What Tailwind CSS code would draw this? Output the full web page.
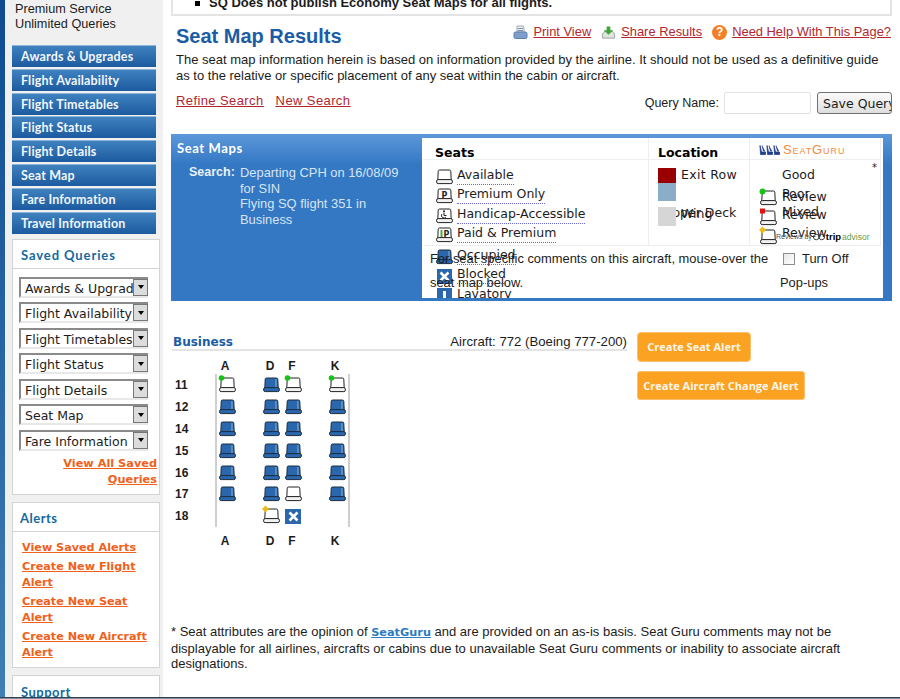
<!DOCTYPE html>
<html lang="en">
<head>
  <meta charset="UTF-8" />
  <title>Seat Map Results</title>
  <script src="https://cdn.jsdelivr.net/npm/@tailwindcss/browser@4"></script>
</head>
<body class="bg-white">

<!-- seat shapes used all over the chart and legend -->
<svg class="hidden">
  <symbol id="seat-full" viewBox="0 0 17 16">
    <path d="M1.8 11 L2.2 2.2 Q2.4 1 3.6 1 H13.4 Q14.6 1 14.8 2.2 L15.2 11 Z" fill="#2a67ad" stroke="#1c2c40" stroke-width="1"/>
    <path d="M12 2 H13.8 L14.2 10.5 H12 Z" fill="#5a8cc4"/>
    <rect x="0.6" y="10.6" width="15.8" height="4" rx="1.6" fill="#2a67ad" stroke="#1c2c40" stroke-width="1"/>
  </symbol>
  <symbol id="seat-open" viewBox="0 0 17 16">
    <path d="M1.8 11 L2.2 2.2 Q2.4 1 3.6 1 H13.4 Q14.6 1 14.8 2.2 L15.2 11 Z" fill="#fff" stroke="#222" stroke-width="1"/>
    <rect x="0.6" y="10.6" width="15.8" height="4" rx="1.6" fill="#f2f2f2" stroke="#222" stroke-width="1"/>
  </symbol>
  <symbol id="guru-seat" viewBox="0 0 7 10">
    <path d="M1 0.5 L2.5 7 H6.5 V9.5 H1.5 Z M3 0.5 L4.5 6 H6" fill="#23408c" stroke="#23408c" stroke-width="0.8"/>
  </symbol>
</svg>

<div class="flex h-[699px] w-[900px] overflow-hidden relative font-['Liberation_Sans',sans-serif] text-[12.9px] text-[#1c1c1c]">

  <!-- left rail -->
  <aside class="w-[171px] shrink-0 flex">
    <div class="w-[5px] bg-gradient-to-b from-[#0e4a92] to-[#3f7fb4]"></div>
    <div class="w-[158px] bg-[#f0f0f0] px-[7px]">
      <div class="pl-[3px] pt-[2px] h-[45px] leading-[15px] text-[12.7px]">
        <p>Premium Service</p>
        <p>Unlimited Queries</p>
      </div>
      <nav class="flex flex-col gap-[1.8px] font-['Lato',sans-serif] font-bold text-[12.5px] tracking-[0.15px] text-[#f2f6fb]">
        <a class="h-[22px] pl-[9px] leading-[21px] bg-gradient-to-b from-[#3f82bf] to-[#1c5a9f] border-t border-[#8fb4d6]">Awards &amp; Upgrades</a>
        <a class="h-[22px] pl-[9px] leading-[21px] bg-gradient-to-b from-[#3f82bf] to-[#1c5a9f] border-t border-[#8fb4d6]">Flight Availability</a>
        <a class="h-[22px] pl-[9px] leading-[21px] bg-gradient-to-b from-[#3f82bf] to-[#1c5a9f] border-t border-[#8fb4d6]">Flight Timetables</a>
        <a class="h-[22px] pl-[9px] leading-[21px] bg-gradient-to-b from-[#3f82bf] to-[#1c5a9f] border-t border-[#8fb4d6]">Flight Status</a>
        <a class="h-[22px] pl-[9px] leading-[21px] bg-gradient-to-b from-[#3f82bf] to-[#1c5a9f] border-t border-[#8fb4d6]">Flight Details</a>
        <a class="h-[22px] pl-[9px] leading-[21px] bg-gradient-to-b from-[#3f82bf] to-[#1c5a9f] border-t border-[#8fb4d6]">Seat Map</a>
        <a class="h-[22px] pl-[9px] leading-[21px] bg-gradient-to-b from-[#3f82bf] to-[#1c5a9f] border-t border-[#8fb4d6]">Fare Information</a>
        <a class="h-[22px] pl-[9px] leading-[21px] bg-gradient-to-b from-[#3f82bf] to-[#1c5a9f] border-t border-[#8fb4d6]">Travel Information</a>
      </nav>

      <section class="mt-[5.4px] h-[256px] w-[148px] bg-white border border-[#d4d4d4]">
        <h3 class="h-[29px] pl-[8px] leading-[30px] border-b border-[#d4d4d4] font-['Lato',sans-serif] font-bold text-[13px] tracking-[0.9px] text-[#146a9e]">Saved Queries</h3>
        <div class="pt-[8px] pl-[6px] flex flex-col gap-[4.5px] font-['DejaVu_Sans',sans-serif] text-[12.5px] leading-[19px]">
          <div class="w-[129px] h-[21px] flex border-2 border-r-0 border-[#8a8a8a] border-b-[#e8e8e8]"><span class="w-[112px] pl-[4px] overflow-hidden whitespace-nowrap">Awards &amp; Upgrades</span><span class="w-[15px] h-[17px] bg-[#dcdcdc] border border-[#777] flex items-center justify-center"><i class="border-x-[3px] border-t-[4px] border-x-transparent border-t-black"></i></span></div>
          <div class="w-[129px] h-[21px] flex border-2 border-r-0 border-[#8a8a8a] border-b-[#e8e8e8]"><span class="w-[112px] pl-[4px] overflow-hidden whitespace-nowrap">Flight Availability</span><span class="w-[15px] h-[17px] bg-[#dcdcdc] border border-[#777] flex items-center justify-center"><i class="border-x-[3px] border-t-[4px] border-x-transparent border-t-black"></i></span></div>
          <div class="w-[129px] h-[21px] flex border-2 border-r-0 border-[#8a8a8a] border-b-[#e8e8e8]"><span class="w-[112px] pl-[4px] overflow-hidden whitespace-nowrap">Flight Timetables</span><span class="w-[15px] h-[17px] bg-[#dcdcdc] border border-[#777] flex items-center justify-center"><i class="border-x-[3px] border-t-[4px] border-x-transparent border-t-black"></i></span></div>
          <div class="w-[129px] h-[21px] flex border-2 border-r-0 border-[#8a8a8a] border-b-[#e8e8e8]"><span class="w-[112px] pl-[4px] overflow-hidden whitespace-nowrap">Flight Status</span><span class="w-[15px] h-[17px] bg-[#dcdcdc] border border-[#777] flex items-center justify-center"><i class="border-x-[3px] border-t-[4px] border-x-transparent border-t-black"></i></span></div>
          <div class="w-[129px] h-[21px] flex border-2 border-r-0 border-[#8a8a8a] border-b-[#e8e8e8]"><span class="w-[112px] pl-[4px] overflow-hidden whitespace-nowrap">Flight Details</span><span class="w-[15px] h-[17px] bg-[#dcdcdc] border border-[#777] flex items-center justify-center"><i class="border-x-[3px] border-t-[4px] border-x-transparent border-t-black"></i></span></div>
          <div class="w-[129px] h-[21px] flex border-2 border-r-0 border-[#8a8a8a] border-b-[#e8e8e8]"><span class="w-[112px] pl-[4px] overflow-hidden whitespace-nowrap">Seat Map</span><span class="w-[15px] h-[17px] bg-[#dcdcdc] border border-[#777] flex items-center justify-center"><i class="border-x-[3px] border-t-[4px] border-x-transparent border-t-black"></i></span></div>
          <div class="w-[129px] h-[21px] flex border-2 border-r-0 border-[#8a8a8a] border-b-[#e8e8e8]"><span class="w-[112px] pl-[4px] overflow-hidden whitespace-nowrap">Fare Information</span><span class="w-[15px] h-[17px] bg-[#dcdcdc] border border-[#777] flex items-center justify-center"><i class="border-x-[3px] border-t-[4px] border-x-transparent border-t-black"></i></span></div>
        </div>
        <a class="block mt-[5px] pr-[2px] text-right font-['DejaVu_Sans',sans-serif] font-bold text-[11.3px] leading-[16px] underline text-[#f0611c]">View All Saved<br>Queries</a>
      </section>

      <section class="mt-[7px] h-[166px] w-[148px] bg-white border border-[#d4d4d4]">
        <h3 class="h-[29px] pl-[7px] leading-[30px] border-b border-[#d4d4d4] font-['Lato',sans-serif] font-bold text-[13px] tracking-[0.5px] text-[#146a9e]">Alerts</h3>
        <div class="pl-[9px] pt-[8px] flex flex-col gap-[3px] font-['DejaVu_Sans',sans-serif] font-bold text-[11.2px] leading-[16px] text-[#f0611c] underline">
          <a>View Saved Alerts</a>
          <a>Create New Flight<br>Alert</a>
          <a>Create New Seat<br>Alert</a>
          <a>Create New Aircraft<br>Alert</a>
        </div>
      </section>

      <section class="mt-[7px] h-[60px] w-[148px] bg-white border border-[#d4d4d4]">
        <h3 class="pl-[8px] pt-[7px] font-['Lato',sans-serif] font-bold text-[13px] tracking-[0.5px] text-[#146a9e]">Support</h3>
      </section>
    </div>
    <div class="w-[8px]"></div>
  </aside>

  <!-- main column -->
  <main class="w-[729px] shrink-0">
    <div class="w-[721px] h-[16px] border-2 border-t-0 border-[#e4e4e4] overflow-hidden">
      <p class="pl-[22px] -mt-[5px] font-bold text-[13px] leading-[16px] flex items-center gap-[9px]"><i class="w-[5px] h-[5px] bg-black"></i>SQ Does not publish Economy Seat Maps for all flights.</p>
    </div>

    <div class="flex w-[721px] pl-[5px] pr-[1px] h-[35px]">
      <h1 class="pt-[8px] font-bold text-[20px] leading-[24px] text-[#1b5ca6]">Seat Map Results</h1>
      <div class="ml-auto pt-[8px] flex gap-[10px] items-start text-[12.9px] leading-[16px] text-[#b3262f]">
        <span class="flex items-center gap-[5px]">
          <svg class="w-[15px] h-[15px]" viewBox="0 0 15 15"><path d="M4 1 H10 L11 3 V7 H4 Z" fill="#f2f2f2" stroke="#9aa6b4"/><path d="M5 3.5 H10 M5 5.5 H10" stroke="#7e8fa3"/><rect x="1" y="7" width="13" height="6.5" rx="1.5" fill="#7d9fcb" stroke="#5c7ea8"/></svg>
          <a class="underline">Print View</a>
        </span>
        <span class="flex items-center gap-[5px]">
          <svg class="w-[15px] h-[15px]" viewBox="0 0 16 15"><path d="M2 9 L4 6 H12 L14.5 9 V13.5 H1.5 V9 Z" fill="#dfe3df" stroke="#9ba39b"/><path d="M6 1 H10 V5 H13 L8 10 L3 5 H6 Z" fill="#3fa63a"/></svg>
          <a class="underline">Share Results</a>
        </span>
        <span class="flex items-center gap-[5px]">
          <span class="w-[15px] h-[15px] rounded-full bg-[#f57f26] text-white font-bold text-[12px] leading-[15px] text-center">?</span>
          <a class="underline">Need Help With This Page?</a>
        </span>
      </div>
    </div>

    <p class="ml-[5px] w-[712px] pt-[1px] text-[13px] leading-[16px]">The seat map information herein is based on information provided by the airline. It should not be used as a definitive guide as to the relative or specific placement of any seat within the cabin or aircraft.</p>

    <div class="flex w-[721px] pl-[5px] pt-[8px] h-[50px] items-start">
      <div class="flex gap-[12px] mt-[1px] text-[13px] tracking-[0.4px] leading-[16px] text-[#b3262f] underline">
        <a>Refine Search</a>
        <a>New Search</a>
      </div>
      <div class="ml-auto flex items-start">
        <span class="pt-[3px] pr-[5px] leading-[16px] text-[12.5px]">Query Name:</span>
        <span class="w-[87px] h-[22px] border border-[#dfe3e8] rounded-[2px]"></span>
        <span class="ml-[6px] w-[75px] h-[22px] overflow-hidden whitespace-nowrap pl-[5px] border border-[#707070] rounded-[3px] bg-gradient-to-b from-[#fbfbfb] to-[#dedede] font-['DejaVu_Sans',sans-serif] text-[12.5px] leading-[21px]">Save Query</span>
      </div>
    </div>

    <!-- legend panel -->
    <section class="w-[721px] h-[167px] bg-gradient-to-b from-[#5c98da] to-[#3478c4] to-[18%] flex text-white">
      <div class="w-[251px] pl-[6px] pt-[6px]">
        <h2 class="font-['Lato',sans-serif] font-bold text-[13px] tracking-[0.6px] leading-[16px]">Seat Maps</h2>
        <div class="flex mt-[9px] leading-[15.5px] text-[12.9px]">
          <span class="w-[63px] pl-[12px] font-bold shrink-0 text-[#e8f0f8] text-[12.5px]">Search:</span>
          <p class="text-[#d6e4f3]">Departing CPH on 16/08/09<br>for SIN<br>Flying SQ flight 351 in<br>Business</p>
        </div>
      </div>
      <div class="w-[461px] h-[160px] mt-[4px] bg-white overflow-hidden text-[#1c1c1c] relative">
        <div class="grid grid-cols-[226px_101px_131px] grid-rows-[22px_86px_50px] ml-[1px]">
          <div class="border-b border-r border-[#eeeeee] pl-[12px] pt-[6px] font-bold text-[12.5px] font-['DejaVu_Sans',sans-serif] text-black">Seats</div>
          <div class="border-b border-r border-[#eeeeee] pl-[9px] pt-[6px] font-bold text-[12.5px] font-['DejaVu_Sans',sans-serif] text-black">Location</div>
          <div class="border-b border-r border-[#eeeeee] pl-[9px] pt-[2px] flex items-center gap-[1px]">
            <span class="flex w-[23px]">
              <svg class="w-[7px] h-[10px]"><use href="#guru-seat"/></svg>
              <svg class="w-[7px] h-[10px]"><use href="#guru-seat"/></svg>
              <svg class="w-[7px] h-[10px]"><use href="#guru-seat"/></svg>
            </span>
            <span class="text-[#ef8c3e] text-[13px] leading-[12px] [font-variant:small-caps] tracking-[0.9px]">SeatGuru</span>
          </div>

          <div class="border-b border-r border-[#eeeeee] relative font-['DejaVu_Sans',sans-serif] text-[12.5px]">
            <ul class="pl-[13px] pt-[6px] flex flex-col">
              <li class="flex h-[19.2px] items-end gap-[4px]">
                <svg class="w-[17px] h-[16px] shrink-0"><use href="#seat-open"/></svg>
                <span class="border-b border-dotted border-[#6a6ae0] leading-[18px]">Available</span>
              </li>
              <li class="flex h-[19.2px] items-end gap-[4px]">
                <svg class="w-[17px] h-[16px] shrink-0 overflow-visible"><use href="#seat-open"/><text x="5.5" y="9.5" font-size="8" font-weight="700" fill="#222">P</text></svg>
                <span class="border-b border-dotted border-[#6a6ae0] leading-[18px]">Premium Only</span>
              </li>
              <li class="flex h-[19.2px] items-end gap-[4px]">
                <svg class="w-[17px] h-[16px] shrink-0 overflow-visible"><use href="#seat-open"/><circle cx="8" cy="3.2" r="1" fill="#222"/><path d="M8 4.5 V7.5 H10.5 M6 6 A2.4 2.4 0 1 0 10 9" fill="none" stroke="#222"/></svg>
                <span class="border-b border-dotted border-[#6a6ae0] leading-[18px]">Handicap-Accessible</span>
              </li>
              <li class="flex h-[19.2px] items-end gap-[4px]">
                <svg class="w-[17px] h-[16px] shrink-0 overflow-visible"><use href="#seat-open"/><rect x="4.5" y="3" width="2" height="7" fill="#3fae4a"/><text x="7.5" y="9.5" font-size="8" font-weight="700" fill="#222">P</text></svg>
                <span class="border-b border-dotted border-[#6a6ae0] leading-[18px]">Paid &amp; Premium</span>
              </li>
              <li class="flex h-[19.2px] items-end gap-[4px] mt-[3px]">
                <svg class="w-[17px] h-[16px] shrink-0"><use href="#seat-full"/></svg>
                <span class="border-b border-dotted border-[#6a6ae0] leading-[18px]">Occupied</span>
              </li>
              <li class="flex h-[19.2px] items-end gap-[4px]">
                <span class="w-[15px] h-[15px] mx-[1px] shrink-0 bg-[#2a67ad] text-white flex items-center justify-center"><svg class="w-[11px] h-[11px]" viewBox="0 0 11 11"><path d="M1.5 1.5 L9.5 9.5 M9.5 1.5 L1.5 9.5" stroke="#fff" stroke-width="2.6"/></svg></span>
                <span class="border-b border-dotted border-[#6a6ae0] leading-[18px]">Blocked</span>
              </li>
              <li class="flex h-[19.2px] items-end gap-[4px]">
                <span class="w-[15px] h-[15px] mx-[1px] shrink-0 bg-[#2a67ad] flex justify-center pt-[3px]"><i class="w-[3px] h-[10px] bg-white"></i></span>
                <span class="leading-[18px]">Lavatory</span>
              </li>
            </ul>
          </div>

          <div class="border-b border-r border-[#eeeeee] relative pl-[9px] pt-[8px] font-['DejaVu_Sans',sans-serif] text-[12.5px]">
            <span class="block w-[18px] h-[15px] bg-[#990000]"></span>
            <span class="block w-[18px] h-[18px] bg-[#8aaec8]"></span>
            <span class="block mt-[6px] w-[18px] h-[19px] bg-[#d6d6d6] relative z-10"></span>
            <span class="absolute left-[32px] top-[6px] tracking-[0.3px]">Exit Row</span>
            <span class="absolute left-[32px] top-[45px]">Wing</span>
            <span class="absolute left-[14px] top-[44px]">Upper Deck</span>
          </div>

          <div class="border-b border-r border-[#eeeeee] relative pt-[6px] font-['DejaVu_Sans',sans-serif] text-[12.5px]">
            <span class="absolute right-[3px] top-[2px] text-[10px] leading-[12px]">*</span>
            <p class="pl-[32px] leading-[18px]">Good</p>
            <div class="absolute left-[10px] top-[30px] flex flex-col gap-[3.6px]">
              <svg class="w-[17px] h-[16px] overflow-visible"><use href="#seat-open"/><circle cx="2.5" cy="1.5" r="3" fill="#17c317"/></svg>
              <svg class="w-[17px] h-[16px] overflow-visible"><use href="#seat-open"/><rect x="0" y="-1.5" width="5" height="5" fill="#e01414"/></svg>
              <svg class="w-[17px] h-[16px] overflow-visible"><use href="#seat-open"/><path d="M2.5 -2.5 L6 1 L2.5 4.5 L-1 1 Z" fill="#eebb14"/></svg>
            </div>
            <span class="absolute left-[32px] top-[25px]">Poor</span>
            <span class="absolute left-[32px] top-[28px]">Review</span>
            <span class="absolute left-[32px] top-[43px]">Mixed</span>
            <span class="absolute left-[32px] top-[46px]">Review</span>
            <span class="absolute left-[32px] top-[64px]">Review</span>
            <span class="absolute left-[26px] top-[71px] flex items-center gap-[1px] text-[7px] leading-[12px] text-[#555] whitespace-nowrap font-['Liberation_Sans',sans-serif]">
              Reviews by
              <svg class="w-[12px] h-[8px]" viewBox="0 0 13 8"><circle cx="3.5" cy="4" r="3" fill="none" stroke="#333"/><circle cx="9.5" cy="4" r="3" fill="none" stroke="#333"/></svg>
              <b class="text-[9.5px] text-black">trip</b><b class="text-[8.5px] font-normal text-[#6a9c4a]">advisor</b>
            </span>
          </div>

          <div class="col-span-3 relative leading-[24px] text-[12.9px]">
            <p class="pl-[7px] pt-[1px] w-[352px]">For seat specific comments on this aircraft, mouse-over the seat map below.</p>
            <div class="absolute left-[357px] top-[1px] w-[90px]">
              <div class="flex items-center">
                <span class="w-[12px] h-[12px] ml-[3px] mr-[7px] border border-[#8c8c8c] bg-gradient-to-br from-[#e8e8e8] to-white"></span>
                <span>Turn Off</span>
              </div>
              <p>Pop-ups</p>
            </div>
          </div>
        </div>
      </div>
    </section>

    <!-- seat chart -->
    <div class="flex mt-[32px] w-[721px]">
      <div class="w-[455px] ml-[1px]">
        <div class="flex h-[18px] justify-between border-b-2 border-[#e4e4e4] leading-[18px]">
          <h3 class="pl-[1px] font-['DejaVu_Sans',sans-serif] font-bold text-[12px] text-[#1b5ca6]">Business</h3>
          <span class="text-[13.2px]">Aircraft: 772 (Boeing 777-200)</span>
        </div>

        <div class="relative w-[190px] mt-[7px] font-bold text-[12px] text-[#1c1c1c]">
          <i class="absolute left-[43px] top-[16px] w-[2px] h-[153px] bg-[#cfcfcf]"></i>
          <i class="absolute left-[176px] top-[16px] w-[2px] h-[153px] bg-[#cfcfcf]"></i>
          <div class="grid grid-cols-[47px_44px_22px_44px_18px] grid-rows-[16px_repeat(7,21.9px)_28px] items-center">
            <span></span><span class="w-[12px] text-center">A</span><span class="w-[14px] text-center">D</span><span class="w-[14px] text-center">F</span><span class="w-[12px] text-center">K</span>

            <span class="pl-[3px]">11</span>
            <svg class="w-[17px] h-[16px] overflow-visible"><use href="#seat-open"/><circle cx="2.5" cy="1" r="2.8" fill="#17c317"/></svg>
            <svg class="w-[17px] h-[16px]"><use href="#seat-full"/></svg>
            <svg class="w-[17px] h-[16px] overflow-visible"><use href="#seat-open"/><circle cx="2.5" cy="1" r="2.8" fill="#17c317"/></svg>
            <svg class="w-[17px] h-[16px] overflow-visible"><use href="#seat-open"/><circle cx="2.5" cy="1" r="2.8" fill="#17c317"/></svg>

            <span class="pl-[3px]">12</span>
            <svg class="w-[17px] h-[16px]"><use href="#seat-full"/></svg><svg class="w-[17px] h-[16px]"><use href="#seat-full"/></svg><svg class="w-[17px] h-[16px]"><use href="#seat-full"/></svg><svg class="w-[17px] h-[16px]"><use href="#seat-full"/></svg>

            <span class="pl-[3px]">14</span>
            <svg class="w-[17px] h-[16px]"><use href="#seat-full"/></svg><svg class="w-[17px] h-[16px]"><use href="#seat-full"/></svg><svg class="w-[17px] h-[16px]"><use href="#seat-full"/></svg><svg class="w-[17px] h-[16px]"><use href="#seat-full"/></svg>

            <span class="pl-[3px]">15</span>
            <svg class="w-[17px] h-[16px]"><use href="#seat-full"/></svg><svg class="w-[17px] h-[16px]"><use href="#seat-full"/></svg><svg class="w-[17px] h-[16px]"><use href="#seat-full"/></svg><svg class="w-[17px] h-[16px]"><use href="#seat-full"/></svg>

            <span class="pl-[3px]">16</span>
            <svg class="w-[17px] h-[16px]"><use href="#seat-full"/></svg><svg class="w-[17px] h-[16px]"><use href="#seat-full"/></svg><svg class="w-[17px] h-[16px]"><use href="#seat-full"/></svg><svg class="w-[17px] h-[16px]"><use href="#seat-full"/></svg>

            <span class="pl-[3px]">17</span>
            <svg class="w-[17px] h-[16px]"><use href="#seat-full"/></svg><svg class="w-[17px] h-[16px]"><use href="#seat-full"/></svg><svg class="w-[17px] h-[16px]"><use href="#seat-open"/></svg><svg class="w-[17px] h-[16px]"><use href="#seat-full"/></svg>

            <span class="pl-[3px]">18</span>
            <span></span>
            <svg class="w-[17px] h-[16px] overflow-visible"><use href="#seat-open"/><path d="M2.5 -2.5 L6 1 L2.5 4.5 L-1 1 Z" fill="#eebb14"/></svg>
            <span class="w-[16px] h-[15px] bg-[#2a67ad] flex items-center justify-center"><svg class="w-[11px] h-[11px]" viewBox="0 0 11 11"><path d="M1.5 1.5 L9.5 9.5 M9.5 1.5 L1.5 9.5" stroke="#fff" stroke-width="2.6"/></svg></span>
            <span></span>

            <span></span><span class="w-[12px] text-center">A</span><span class="w-[14px] text-center">D</span><span class="w-[14px] text-center">F</span><span class="w-[12px] text-center">K</span>
          </div>
        </div>
      </div>

      <div class="ml-[10px] -mt-[1px] flex flex-col items-start gap-[9px] font-['Open_Sans',sans-serif] font-bold text-[11px] text-[#fdf6ea]">
        <a class="h-[30px] w-[114px] text-center leading-[28px] bg-[#fba222] border border-[#fbc06c] rounded-[4px]">Create Seat Alert</a>
        <a class="h-[29px] w-[168px] text-center leading-[27px] bg-[#fba222] border border-[#fbc06c] rounded-[3px]">Create Aircraft Change Alert</a>
      </div>
    </div>

    <p class="w-[690px] mt-[69px] leading-[15.5px] text-[13px]">* Seat attributes are the opinion of <a class="font-['DejaVu_Sans',sans-serif] font-bold text-[11.3px] text-[#2d7cc2] underline">SeatGuru</a> and are provided on an as-is basis. Seat Guru comments may not be displayable for all airlines, aircrafts or cabins due to unavailable Seat Guru comments or inability to associate aircraft designations.</p>
  </main>

  <!-- edge of the browser window below the page -->
  <div class="absolute left-0 right-0 bottom-0 h-[2px] bg-[#33414f] border-b border-[#7d8fa3]"></div>
</div>

</body>
</html>
